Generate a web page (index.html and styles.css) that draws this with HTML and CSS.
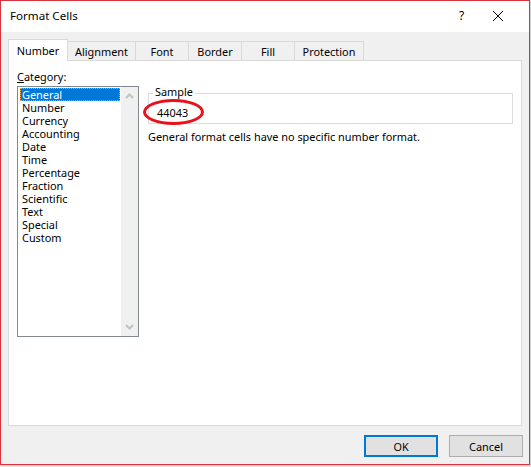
FILE: index.html
```html
<!DOCTYPE html>
<html>
<head>
<meta charset="utf-8">
<link rel="stylesheet" href="styles.css">
</head>
<body>
<div class="window">
  <div class="titlebar">
    <span class="title">Format Cells</span>
    <span class="help">?</span>
    <span class="close"><svg width="12" height="12" viewBox="0 0 12 12"><path d="M1 1L11 11M11 1L1 11" stroke="#000" stroke-width="1" fill="none"/></svg></span>
  </div>
  <div class="body">
    <div class="tabs">
      <div class="tab active">Number</div>
      <div class="tab t-align">Alignment</div>
      <div class="tab t-font">Font</div>
      <div class="tab t-border">Border</div>
      <div class="tab t-fill">Fill</div>
      <div class="tab t-prot">Protection</div>
    </div>
    <div class="panel">
      <div class="left">
        <div class="label"><u>C</u>ategory:</div>
        <div class="listbox">
          <div class="items">
            <div class="item selected">General</div>
            <div class="item">Number</div>
            <div class="item">Currency</div>
            <div class="item">Accounting</div>
            <div class="item">Date</div>
            <div class="item">Time</div>
            <div class="item">Percentage</div>
            <div class="item">Fraction</div>
            <div class="item">Scientific</div>
            <div class="item">Text</div>
            <div class="item">Special</div>
            <div class="item">Custom</div>
          </div>
          <div class="scrollbar">
            <svg class="arrow" width="9" height="6" viewBox="0 0 9 6"><path d="M1 5L4.5 1.5L8 5" stroke="#c2c2c2" stroke-width="2" fill="none"/></svg>
            <svg class="arrow" width="9" height="6" viewBox="0 0 9 6"><path d="M1 1L4.5 4.5L8 1" stroke="#c2c2c2" stroke-width="2" fill="none"/></svg>
          </div>
        </div>
      </div>
      <div class="right">
        <div class="group">
          <span class="legend">Sample</span>
          <div class="sample">44043</div>
          <div class="ellipse"></div>
        </div>
        <div class="desc">General format cells have no specific number format.</div>
      </div>
    </div>
    <div class="buttons">
      <div class="btn default">OK</div>
      <div class="btn">Cancel</div>
    </div>
  </div>
</div>
</body>
</html>
```
FILE: styles.css
```css
html, body {
  margin: 0;
  padding: 0;
  background: #ebebeb;
}
body {
  width: 531px;
  height: 467px;
  overflow: hidden;
  font-family: "Noto Sans", "Open Sans", sans-serif;
  font-size: 10.9px;
  color: #000;
}
.window {
  width: 528px;
  height: 463px;
  border: 1px solid #d9323f;
  background: #f0f0f0;
  display: flex;
  flex-direction: column;
  box-shadow: 1px 1px 2px rgba(0,0,0,0.15);
}
.titlebar {
  height: 31px;
  background: #fff;
  display: flex;
  align-items: center;
  flex: none;
}
.title {
  margin-left: 9px;
  font-size: 11.6px;
  flex: 1;
  padding-bottom: 2px;
}
.help {
  width: 14px;
  margin-right: 19px;
  font-size: 12px;
  padding-bottom: 2px;
}
.close {
  width: 12px;
  margin-right: 25px;
  height: 12px;
  display: flex;
  margin-bottom: 2px;
}
.body {
  flex: 1;
  display: flex;
  flex-direction: column;
  padding: 7px 7px 0 7px;
}
.tabs {
  display: flex;
  align-items: flex-end;
  height: 21px;
  position: relative;
  z-index: 1;
}
.tab {
  height: 19px;
  box-sizing: border-box;
  border: 1px solid #d9d9d9;
  border-bottom: none;
  border-left: none;
  background: #f0f0f0;
  display: flex;
  align-items: center;
  justify-content: center;
  padding-top: 1px;
}
.tab.active {
  width: 60px;
  height: 22px;
  background: #fff;
  border-left: 1px solid #d9d9d9;
  margin-bottom: -1px;
  padding-bottom: 2px;
}
.t-align { width: 68px; }
.t-font { width: 53px; }
.t-border { width: 53px; }
.t-fill { width: 53px; }
.t-prot { width: 69px; }
.panel {
  width: 514px;
  height: 366px;
  box-sizing: border-box;
  background: #fff;
  border: 1px solid #d9d9d9;
  display: flex;
  padding: 9px 8px 0 8px;
  gap: 9px;
}
.left {
  display: flex;
  flex-direction: column;
}
.label {
  height: 14px;
  line-height: 14px;
  padding-bottom: 2px;
}
.listbox {
  width: 122px;
  height: 251px;
  box-sizing: border-box;
  border: 1px solid #828790;
  display: flex;
}
.items {
  flex: 1;
  padding: 1px 1px 0 2px;
}
.item {
  height: 13px;
  line-height: 13px;
  padding-left: 2px;
  white-space: nowrap;
}
.item.selected {
  background: #0078d7;
  color: #fff;
  outline: 1px dotted #f0a040;
  outline-offset: -1px;
}
.scrollbar {
  width: 17px;
  background: #f0f0f0;
  display: flex;
  flex-direction: column;
  justify-content: space-between;
  align-items: center;
  padding: 6px 0 6px 0;
}
.right {
  flex: 1;
  display: flex;
  flex-direction: column;
  padding-top: 16px;
}
.group {
  position: relative;
  width: 365px;
  height: 31px;
  border: 1px solid #dcdcdc;
  margin-top: 7px;
  box-sizing: border-box;
}
.legend {
  position: absolute;
  left: 4px;
  top: -9px;
  background: #fff;
  padding: 0 2px;
  line-height: 14px;
}
.sample {
  padding-left: 8px;
  padding-top: 12px;
  line-height: 14px;
}
.ellipse {
  position: absolute;
  left: -6px;
  top: 5px;
  width: 55px;
  height: 20px;
  border: 3px solid #e8101a;
  border-radius: 50%;
}
.desc {
  margin-top: 5px;
  line-height: 15px;
}
.buttons {
  display: flex;
  justify-content: flex-end;
  gap: 11px;
  padding: 9px 0 0 0;
  margin-right: -1px;
}
.btn {
  width: 74px;
  height: 22px;
  box-sizing: border-box;
  border: 1px solid #adadad;
  background: #e1e1e1;
  display: flex;
  align-items: center;
  justify-content: center;
}
.btn.default {
  border: 2px solid #0078d7;
}
```
